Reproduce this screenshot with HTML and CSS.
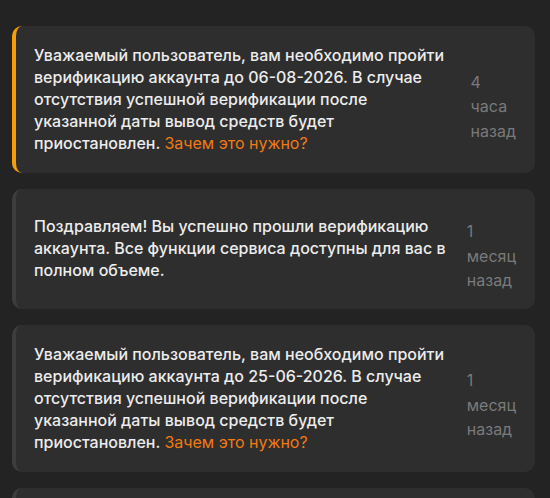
FILE: index.html
```html
<!DOCTYPE html>
<html lang="ru">
<head>
<meta charset="utf-8">
<title>Уведомления</title>
<link rel="stylesheet" href="styles.css">
</head>
<body>
<div class="feed">
  <div class="note note--warn">
    <p class="note__text">Уважаемый пользователь, вам необходимо пройти верификацию аккаунта до 06-08-2026. В случае отсутствия успешной верификации после указанной даты вывод средств будет приостановлен. <a class="note__link" href="#">Зачем это нужно?</a></p>
    <div class="note__time">4<br>часа<br>назад</div>
  </div>
  <div class="note">
    <p class="note__text">Поздравляем! Вы успешно прошли верификацию аккаунта. Все функции сервиса доступны для вас в полном объеме.</p>
    <div class="note__time">1<br>месяц<br>назад</div>
  </div>
  <div class="note">
    <p class="note__text">Уважаемый пользователь, вам необходимо пройти верификацию аккаунта до 25-06-2026. В случае отсутствия успешной верификации после указанной даты вывод средств будет приостановлен. <a class="note__link" href="#">Зачем это нужно?</a></p>
    <div class="note__time">1<br>месяц<br>назад</div>
  </div>
  <div class="note">
    <p class="note__text">Поздравляем! Вы успешно прошли верификацию аккаунта. Все функции сервиса доступны для вас в полном объеме.</p>
    <div class="note__time">2<br>месяца<br>назад</div>
  </div>
</div>
</body>
</html>
```
FILE: styles.css
```css
html, body {
  margin: 0;
  background: #232323;
}

body {
  font-family: Inter, "Noto Sans", sans-serif;
  overflow: hidden;
  height: 498px;
}

.feed {
  display: flex;
  flex-direction: column;
  gap: 16px;
  padding: 26px 15px 0 12px;
}

.note {
  display: flex;
  align-items: center;
  gap: 19px;
  background: #2e2e2e;
  border-left: 4px solid #3d3d3d;
  border-radius: 10px;
  padding: 18px 19px 19px 18px;
}

.note--warn {
  border-left-color: #f59e0b;
}

.note__text {
  flex: 1;
  margin: 0;
  font-size: 16px;
  font-weight: 500;
  line-height: 22px;
  color: #ececec;
}

.note__link {
  color: #f27a12;
  font-weight: 400;
  text-decoration: none;
}

/* time stamp sits slightly below the centre line of the card */
.note__time {
  padding-top: 12px;
  margin-bottom: -3px;
  font-size: 16px;
  line-height: 24.5px;
  color: #7a7a7a;
  white-space: nowrap;
}
```
